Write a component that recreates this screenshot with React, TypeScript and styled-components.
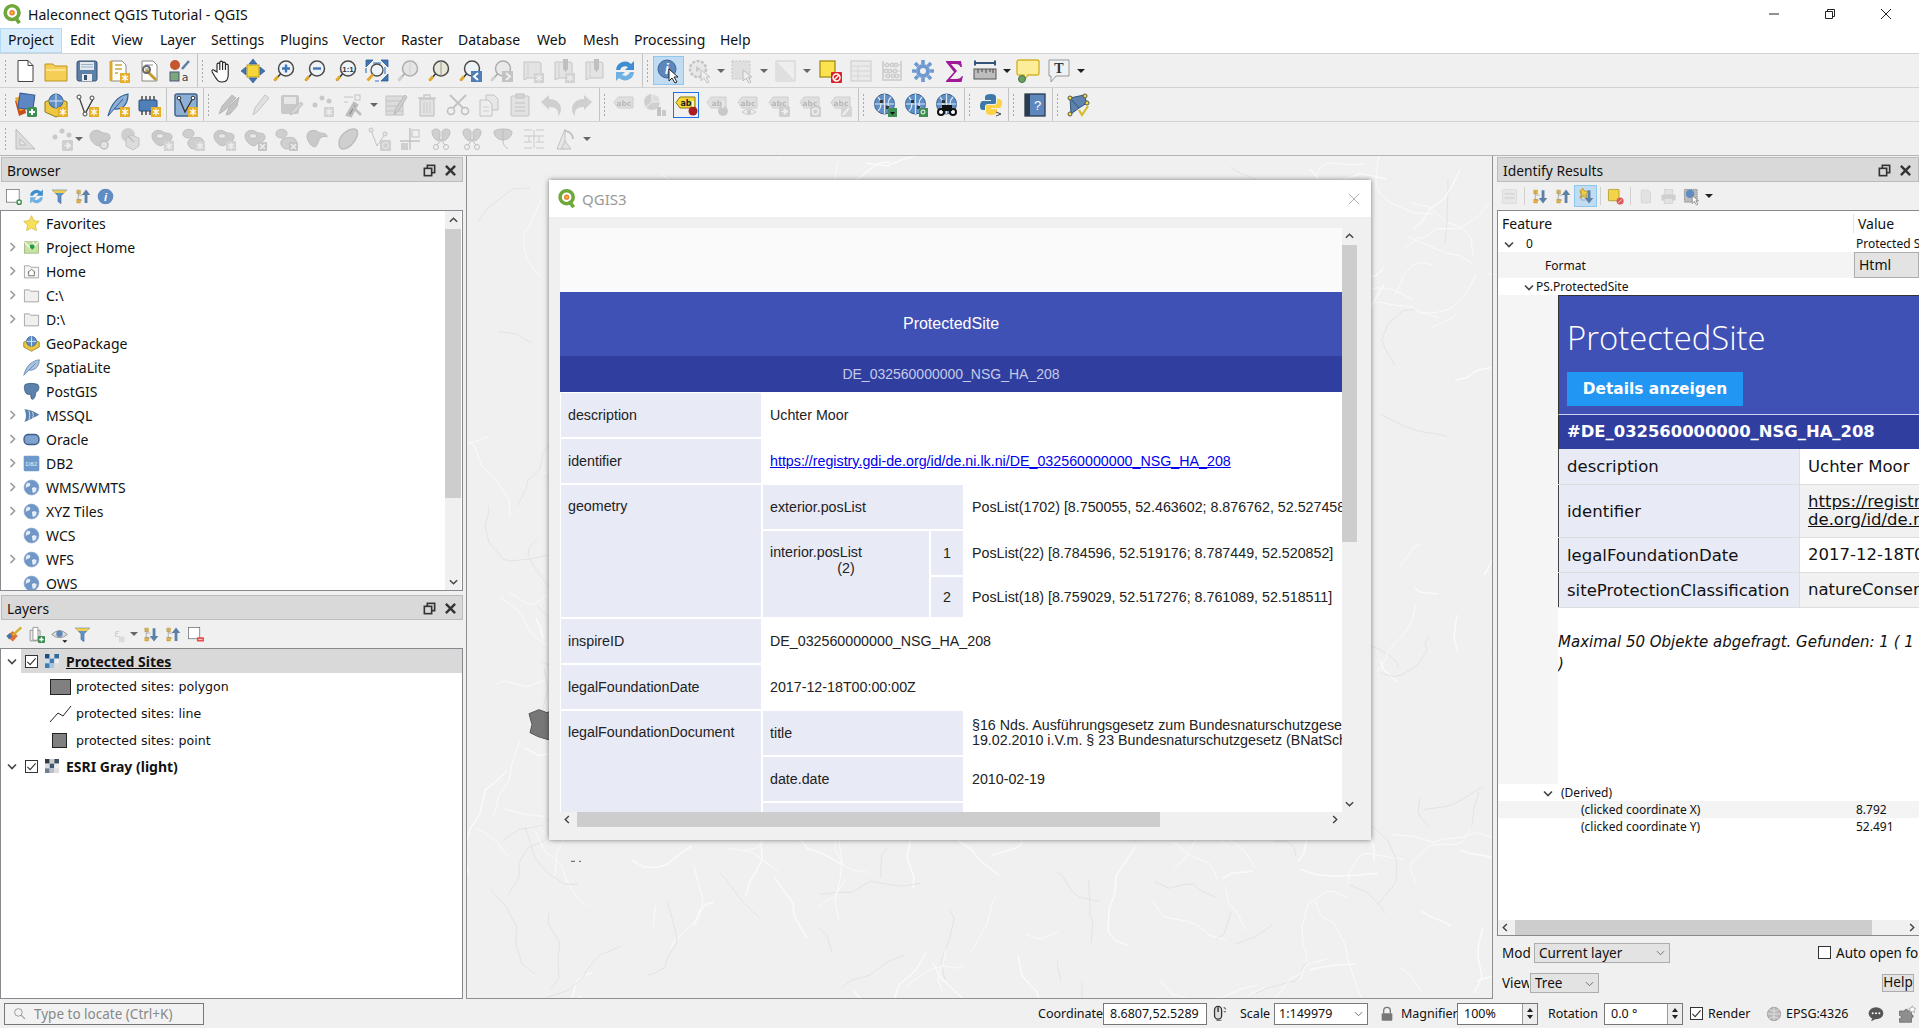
import React, { useMemo } from 'react';
import styled, { createGlobalStyle } from 'styled-components';

const UI = `"Noto Sans", "Open Sans", sans-serif`;
const VERD = `"DejaVu Sans", sans-serif`;
const ARIAL = `"Liberation Sans", Arial, sans-serif`;

const Global = createGlobalStyle`
  html, body { margin: 0; padding: 0; width: 1919px; height: 1028px; overflow: hidden; background: #f0f0f0; }
  * { box-sizing: border-box; }
  body { font-family: ${UI}; color: #111; }
`;

/* ---------- icon drawings ---------- */
const badge = (kind = 'star') => kind === 'star'
  ? <g><rect x="14" y="14" width="10" height="10" fill="#e5b024" /><path d="M19 15.5v7M16 17l6 4M22 17l-6 4" stroke="#fff" strokeWidth="1.3" /></g>
  : kind === 'plus'
    ? <g><rect x="14" y="14" width="10" height="10" rx="1.5" fill="#3f8f55" /><path d="M19 16v6M16 19h6" stroke="#fff" strokeWidth="2" /></g>
    : <g><rect x="15" y="15" width="9" height="9" rx="1" fill="#8b8b8b" /><path d="M17 17l5 5M22 17l-5 5" stroke="#fff" strokeWidth="1.6" /></g>;
const mag = (inner?: React.ReactNode, fill = '#eef3f8') => (
  <g>
    <circle cx="14" cy="9.5" r="7.5" fill={fill} stroke="#4a4a4a" strokeWidth="1.5" />
    <path d="M8.5 15L2.5 21.5" stroke="#333" strokeWidth="1.5" />
    <path d="M6 17.5L2.5 21.5" stroke="#e0a92a" strokeWidth="3" />
    {inner}
  </g>
);
const BLOB = 'M2 9c0-6 8-7 11-4 3 2 9 0 9 5 0 6-7 4-9 8-3 3-11-3-11-9z';
const blob = (extra?: React.ReactNode) => <g><path d={BLOB} fill="#9aa09a" stroke="#777" />{extra}</g>;
const globe = (extra?: React.ReactNode) => (
  <g>
    <circle cx="11.5" cy="11" r="10" fill="#5f8fc6" stroke="#37608f" />
    <path d="M1.5 11h20M11.5 1v20M5 4c4 4 4 10 0 14M18 4c-4 4-4 10 0 14" stroke="#dfe8f2" strokeWidth="1.2" fill="none" />
    <path d="M7 7h3v3H7zM13 13h3v3h-3z" fill="#333" />
    {extra}
  </g>
);
const abc = (extra?: React.ReactNode, label = 'abc') => (
  <g>
    <path d="M6 4h15v11H6l-4-5.5z" fill="#d6d6d0" stroke="#aaa" />
    <text x="12" y="12.5" fontSize="7.5" fontWeight="700" textAnchor="middle" fontFamily={VERD} fill="#666">{label}</text>
    {extra}
  </g>
);
const page = <path d="M5 2h11l4 4v16H5z" fill="#fff" stroke="#888" />;
const bookmark = (extra?: React.ReactNode) => (
  <g><path d="M4 3h15l2 1v15H8l-4 2z" fill="#e2e2de" stroke="#8d8d8d" /><path d="M8 4v15" stroke="#aaa" />{extra}</g>
);
const tool3 = <path d="M4 3h5v5H4zM4 16h5v5H4z" fill="#f0b93a" stroke="#a77a10" strokeWidth=".6" />;
const fold = <path d="M6 4v13h6M6 10h6" fill="none" stroke="#999" />;
const rasterCells = (cells: string[]) => (
  <g>{cells.map((c, i) => <rect key={i} x={(i % 3) * 8} y={Math.floor(i / 3) * 8} width="8" height="8" fill={c} />)}</g>
);

const ICONS: Record<string, React.ReactNode> = {
  qgis: <g><circle cx="11" cy="10.5" r="7.5" fill="#fff" stroke="#6ea83a" strokeWidth="4" /><path d="M14 15l5 7" stroke="#6ea83a" strokeWidth="4" /><circle cx="11" cy="10.5" r="3" fill="#ee7d31" /><circle cx="11" cy="10.5" r="1.3" fill="#f3c93f" /></g>,
  new: <g><path d="M5 1.5h10l5 5v16H5z" fill="#fff" stroke="#444" /><path d="M15 1.5v5h5" fill="none" stroke="#444" /></g>,
  open: <g><path d="M1 5h8l2 2h12v15H1z" fill="#f5cf55" stroke="#bd9425" /><path d="M2 11h20" stroke="#fbe9a5" strokeWidth="1.5" /></g>,
  save: <g><rect x="2" y="2" width="20" height="20" rx="2" fill="#5c80a8" stroke="#34506f" /><rect x="5" y="3" width="14" height="8" fill="#e2e8ee" /><path d="M6 5.5h12M6 8h12" stroke="#9fb1c4" /><rect x="7" y="15" width="10" height="7" fill="#ececec" /><rect x="9" y="16" width="3" height="5" fill="#34506f" /></g>,
  tpl: <g>{page}<path d="M5 2v20" stroke="#d8a72d" strokeWidth="3" /><path d="M9 6h7M9 10h7M9 14h3" stroke="#c9a545" strokeWidth="1.5" />{badge()}</g>,
  wrench: <g>{page}<path d="M8 6h8M8 10h4" stroke="#88a" /><path d="M9 11l10 10" stroke="#c89a2c" strokeWidth="3" /><circle cx="9.5" cy="10.5" r="3.5" fill="none" stroke="#666" strokeWidth="2" /></g>,
  styles: <g><circle cx="7" cy="6" r="5" fill="#c4572d" /><path d="M14 10l7-8" stroke="#5c80a8" strokeWidth="2.5" /><rect x="2" y="13" width="9" height="9" fill="#78a87c" stroke="#557" /><text x="17" y="22" fontSize="11" fontFamily={VERD} fill="#444" textAnchor="middle">a</text></g>,
  hand: <path d="M7 13V5.500a1.400 1.400 0 0 1 2.800 0V11V3.500a1.400 1.400 0 0 1 2.800 0V11V4.500a1.400 1.400 0 0 1 2.800 0V11V6.500a1.400 1.400 0 0 1 2.800 0V16c0 4-2 7-6 7s-5-2-7-5l-3-5c-1-2 1-3 2.300-1.500z" fill="#fff" stroke="#222" strokeWidth="1.100" />,
  pan: <g><rect x="6" y="6" width="12" height="12" fill="#f5d63a" stroke="#b79a1a" /><path d="M12 0l4 5H8zM12 24l4-5H8zM0 12l5-4v8zM24 12l-5-4v8z" fill="#3f74b5" stroke="#254d80" strokeWidth=".6" /></g>,
  zin: mag(<path d="M14 5.500v8M10 9.500h8" stroke="#3f74b5" strokeWidth="2.400" />),
  zout: mag(<path d="M10 9.500h8" stroke="#3f74b5" strokeWidth="2.400" />),
  z11: mag(<text x="14" y="12.500" fontSize="8" fontWeight="700" textAnchor="middle" fontFamily={ARIAL} fill="#333">1:1</text>),
  zfull: <g><path d="M1 1h7L1 8zM23 1h-7l7 7zM23 22h-7l7-7z" fill="#3f74b5" stroke="#2c5a92" strokeWidth=".8" /><path d="M8 4h8M20 8v7M1 9v5M10 22h4" stroke="#6f9ad0" strokeWidth="1.600" /><circle cx="12" cy="11" r="6" fill="#eef3f8" stroke="#4a4a4a" strokeWidth="1.300" /><path d="M8 15.500L2.500 21.500" stroke="#e0a92a" strokeWidth="2.800" /></g>,
  zsel: mag(<path d="M14 2v15" stroke="#aaa" />, '#e8e8e0'),
  zlay: mag(<path d="M14 2v15" stroke="#999" />, '#e7e7d8'),
  zlast: <g>{mag()}<rect x="13" y="12" width="11" height="11" fill="#4e7fb8" /><path d="M20 14l-4 3.500 4 3.500" fill="none" stroke="#fff" strokeWidth="2" /></g>,
  znext: <g>{mag()}<rect x="13" y="12" width="11" height="11" fill="#888" /><path d="M17 14l4 3.500-4 3.500" fill="none" stroke="#fff" strokeWidth="2" /></g>,
  bmnew: bookmark(badge()),
  bmstar: bookmark(<g><path d="M12 0h5v10l-2.500 3-2.500-3z" fill="#5c80a8" />{badge()}</g>),
  bm: bookmark(<path d="M12 0h5v10l-2.500 3-2.500-3z" fill="#5c80a8" />),
  refresh: <g><path d="M3 11a9 9 0 0 1 15-6l3-3v9h-9l3-3a5.500 5.500 0 0 0-8 3z" fill="#3f8ecf" /><path d="M21 13a9 9 0 0 1-15 6l-3 3v-9h9l-3 3a5.500 5.500 0 0 0 8-3z" fill="#6fb1e2" /></g>,
  identify: <g><circle cx="10" cy="10" r="9" fill="#5c86bc" stroke="#3e6596" /><text x="10" y="15" fontSize="14" fontStyle="italic" fontWeight="700" textAnchor="middle" fontFamily={ARIAL} fill="#fff">i</text><path d="M12 10v12l3-3 3 5 2-1-3-5h4z" fill="#fff" stroke="#222" /></g>,
  actions: <g><circle cx="10" cy="10" r="8" fill="#eee" stroke="#888" strokeWidth="2.500" strokeDasharray="3 1.500" /><path d="M8 7v6l5-3z" fill="#999" /><path d="M13 11v11l3-3 3 5 2-1-3-5h4z" fill="#fff" stroke="#888" /></g>,
  select: <g><rect x="1" y="2" width="18" height="18" fill="#d8d6c9" stroke="#888" strokeDasharray="2 1.500" /><path d="M12 11v11l3-3 3 5 2-1-3-5h4z" fill="#fff" stroke="#777" /></g>,
  selpoly: <g><path d="M2 2h19v20H2z" fill="#fff" stroke="#aaa" /><path d="M2 2l19 20H2z" fill="#d8d6c9" /></g>,
  desel: <g><rect x="2" y="2" width="15" height="16" fill="#fbe34f" stroke="#a58d14" strokeWidth="1.300" /><rect x="13" y="13" width="11" height="11" rx="1" fill="#d8232a" /><circle cx="18.500" cy="18.500" r="3.500" fill="none" stroke="#fff" strokeWidth="1.500" /><path d="M16 21l5-5" stroke="#fff" strokeWidth="1.500" /></g>,
  table: <g><rect x="2" y="2" width="20" height="20" fill="#f5f5f5" stroke="#999" /><path d="M2 7h20M2 12h20M2 17h20M9 7v15" stroke="#bbb" /></g>,
  abacus: <g><path d="M3 2v18M21 2v18M2 21h20" stroke="#999" strokeWidth="1.500" /><path d="M3 6h18M3 12h18M3 17h18" stroke="#aaa" />{[7, 12, 16].map(x => <circle key={x} cx={x} cy="6" r="2" fill="#ddd" stroke="#888" />)}{[6, 10, 15].map(x => <circle key={x} cx={x} cy="12" r="2" fill="#ddd" stroke="#888" />)}{[8, 13, 17].map(x => <circle key={x} cx={x} cy="17" r="2" fill="#ddd" stroke="#888" />)}</g>,
  gear: <g><path d="M12 1v4M12 19v4M1 12h4M19 12h4M4 4l3 3M17 17l3 3M20 4l-3 3M7 17l-3 3" stroke="#6f9ad0" strokeWidth="3.600" /><circle cx="12" cy="12" r="7" fill="#6f9ad0" /><circle cx="12" cy="12" r="3" fill="#f0f0f0" /></g>,
  sigma: <path d="M4 2h15l1 6h-1.500c-1-2-2-3-5-3H9l6 7-7 8h6c3 0 5-1 6-3h1l-1.500 6H4v-1l8-9L4 3z" fill="#a0189a" />,
  ruler: <g><path d="M2 4h20M2 1.500v5M22 1.500v5" stroke="#35547a" strokeWidth="2" /><rect x="1" y="10" width="22" height="10" fill="#bdbdbd" stroke="#555" /><path d="M5 10v4M9 10v3M13 10v4M17 10v3M20 10v4" stroke="#444" /></g>,
  callout: <g><path d="M3 1h18q2 0 2 2v11q0 2-2 2h-9l-4 5v-5H3q-2 0-2-2V3q0-2 2-2z" fill="#fdec98" stroke="#d5b32d" strokeWidth="1.400" /><circle cx="6" cy="20" r="3.500" fill="#6aa061" stroke="#47734a" /></g>,
  textann: <g><path d="M2 1h20v16H9l-5 6v-6H2z" fill="#eef2f5" stroke="#999" /><text x="12" y="14" fontSize="14" fontWeight="700" textAnchor="middle" fontFamily={`"Liberation Serif", serif`} fill="#333">T</text></g>,
  dsm: <g><path d="M2 8l8-3 3 15-7 3z" fill="#c94f1f" /><path d="M2 5l9-3 3 13-7 3z" fill="#f0a52c" /><rect x="6" y="1" width="15" height="15" fill="#5c86c4" stroke="#33588c" transform="rotate(8 13 8)" />{badge('plus')}</g>,
  gpkg: <g><path d="M1 9l11-5 11 5v10l-11 5-11-5z" fill="#eec742" stroke="#8b7a1d" /><circle cx="12" cy="8" r="7" fill="#5f8fc6" stroke="#37608f" /><path d="M5 8h14M12 1v14" stroke="#dfe8f2" />{badge()}</g>,
  shp: <g><path d="M4 4l6 17 8-15" fill="none" stroke="#444" strokeWidth="1.300" /><path d="M10 21L18 6M18 6" stroke="#444" />{[[4, 4], [10, 21], [17, 5]].map(([x, y], i) => <circle key={i} cx={x} cy={y} r="2" fill="#fff" stroke="#444" />)}{badge()}</g>,
  feather: <g><path d="M2 23C5 12 11 3 22 1c0 10-5 16-14 15" fill="#8fb0d4" stroke="#2f5f95" strokeWidth="1.200" /><path d="M2 23L17 6" stroke="#2f5f95" />{badge()}</g>,
  chip: <g><rect x="2" y="7" width="18" height="11" rx="1" fill="#4e7fb8" stroke="#284e7d" /><path d="M5 3v4M9 3v4M13 3v4M17 3v4M5 18v4M9 18v4M13 18v4" stroke="#333" strokeWidth="1.300" />{badge()}</g>,
  digit: <g><rect x="1" y="1" width="22" height="22" rx="2" fill="#8eb0d6" stroke="#41658f" strokeWidth="1.500" /><path d="M5 5l6 14 8-14" fill="none" stroke="#333" strokeWidth="1.300" /><circle cx="5" cy="5" r="1.800" fill="#fff" stroke="#333" /><circle cx="19" cy="5" r="1.800" fill="#fff" stroke="#333" />{badge()}</g>,
  pencils: <path d="M2 21l3-8L15 2l4 3L8 17zM9 22l3-8L22 4l-2 9-7 8z" fill="#888" stroke="#666" />,
  pencil: <path d="M5 22l2-7L17 2l4 3L10 18z" fill="#ddd" stroke="#888" />,
  saveedit: <g><rect x="2" y="2" width="18" height="19" rx="2" fill="#999" /><rect x="5" y="4" width="12" height="7" fill="#eee" /><path d="M11 22l2-5 9-8 2 2-8 9z" fill="#bbb" stroke="#777" /></g>,
  pts: <g><circle cx="5" cy="12" r="2.500" fill="#999" /><circle cx="12" cy="5" r="2.500" fill="#999" /><circle cx="19" cy="8" r="2.500" fill="#999" />{badge()}</g>,
  vtool: <g><path d="M3 4h9M3 9h4" stroke="#888" /><rect x="14" y="2" width="5" height="5" fill="none" stroke="#888" /><path d="M6 22l7-12 3 2-6 11zM12 14l8 8" stroke="#777" strokeWidth="2.500" /></g>,
  tablepen: <g><rect x="2" y="3" width="17" height="19" fill="#ccc" stroke="#888" /><path d="M2 8h17M2 13h17M2 18h17" stroke="#888" /><path d="M10 22l2-7 9-13 2 2-8 13z" fill="#aaa" stroke="#666" /></g>,
  trash: <g><path d="M3 5h18M9 5V2h6v3" stroke="#999" strokeWidth="1.500" fill="none" /><path d="M5 6h14v17H5z" fill="#ddd" stroke="#a66" /><path d="M9 9v11M12 9v11M15 9v11" stroke="#a99" /></g>,
  cut: <g><circle cx="5" cy="18" r="3.500" fill="none" stroke="#777" strokeWidth="1.500" /><circle cx="19" cy="18" r="3.500" fill="none" stroke="#777" strokeWidth="1.500" /><path d="M7 15L20 2M17 15L4 2" stroke="#888" strokeWidth="2" /></g>,
  copy: <g><path d="M9 2h8l4 4v11H9z" fill="#eee" stroke="#888" /><path d="M3 7h8l4 4v12H3z" fill="#fff" stroke="#888" /><path d="M6 14h6M6 18h6" stroke="#aaa" /></g>,
  paste: <g><rect x="3" y="3" width="18" height="20" rx="1" fill="#ddd" stroke="#888" /><rect x="8" y="1" width="8" height="4" fill="#bbb" stroke="#888" /><path d="M7 10h10M7 14h10M7 18h10" stroke="#888" /></g>,
  undo: <path d="M2 9l8-7v4c7 0 12 4 12 10 0 3-1 5-3 7 1-6-2-9-9-9v3z" fill="#aaa" />,
  redo: <path d="M22 9l-8-7v4C7 6 2 10 2 16c0 3 1 5 3 7-1-6 2-9 9-9v3z" fill="#aaa" />,
  abc: abc(),
  diagram: <g><circle cx="9" cy="9" r="8" fill="#aaa" /><path d="M9 9V1a8 8 0 0 1 8 8zM9 9l-6 5" stroke="#fff" fill="#ccc" /><rect x="14" y="14" width="4" height="9" fill="#888" /><rect x="19" y="17" width="4" height="6" fill="#999" /></g>,
  abpin: <g><path d="M6 4h15v11H6l-4-5.500z" fill="#f6d835" stroke="#8d7a10" /><text x="12" y="12.500" fontSize="8" fontWeight="700" textAnchor="middle" fontFamily={VERD} fill="#222">ab</text><circle cx="19" cy="18" r="4.500" fill="#a81e22" /><path d="M19 8v6" stroke="#fff" strokeWidth="1.500" /></g>,
  abpin2: abc(<g><circle cx="18" cy="18" r="5" fill="#999" /><path d="M18 8v7" stroke="#fff" strokeWidth="1.500" /></g>, 'ab'),
  abeye: abc(<g><path d="M6 19q7-6 14 0-7 5-14 0z" fill="#fff" stroke="#999" /><circle cx="13" cy="19" r="2" fill="#999" /></g>),
  abarrow: abc(<g><rect x="12" y="13" width="11" height="11" rx="1.500" fill="#aaa" /><path d="M14 18.500h4M17 15.500l4 3-4 3z" stroke="#fff" fill="#fff" /></g>),
  abrot: abc(<g><rect x="12" y="13" width="11" height="11" rx="1.500" fill="#aaa" /><circle cx="17.500" cy="18.500" r="3" fill="none" stroke="#fff" strokeWidth="1.500" /></g>),
  abpen: abc(<g><rect x="12" y="13" width="11" height="11" rx="1.500" fill="#bbb" /><path d="M14 22l6-7" stroke="#fff" strokeWidth="2" /></g>),
  wms: globe(<g><rect x="15" y="15" width="9" height="9" fill="#3f8f55" /><path d="M17 19h5l-2.500 3z" fill="#111" /></g>),
  wmsq: globe(<g><rect x="15" y="15" width="9" height="9" fill="#3f8f55" /><circle cx="19" cy="19" r="2" fill="none" stroke="#fff" /></g>),
  wfs: <g>{globe()}<circle cx="6" cy="19" r="4" fill="#111" /><circle cx="18" cy="19" r="4" fill="#111" /><circle cx="6" cy="19" r="2" fill="#fff" /><circle cx="18" cy="19" r="2" fill="#fff" /><rect x="7" y="12" width="10" height="6" fill="#111" /></g>,
  python: <g><path d="M12 1c-4 0-6 1-6 3v3h6v1H4c-2 0-3 2-3 5s1 4 3 4h2v-3c0-2 1-3 3-3h6c2 0 2-1 2-2V4c0-2-2-3-5-3z" fill="#3c78a9" /><path d="M12 22c4 0 6-1 6-3v-3h-6v-1h8c2 0 3-2 3-5s-1-4-3-4h-2v3c0 2-1 3-3 3H9c-2 0-2 1-2 2v5c0 2 2 3 5 3z" fill="#fcd347" /><path d="M17 19l5 2-5 2" stroke="#444" fill="none" /></g>,
  help: <g><rect x="2" y="1" width="20" height="22" fill="#5e87bd" stroke="#2b3a4c" strokeWidth="1.300" /><rect x="2" y="1" width="5" height="22" fill="#2b3a4c" /><text x="14.500" y="17" fontSize="13" textAnchor="middle" fontFamily={ARIAL} fill="#fff">?</text></g>,
  net: <g><path d="M4 5l14-3 3 8-8 5-8 6z" fill="#5c82ad" stroke="#37547a" /><path d="M4 5l9 10" stroke="#37547a" />{[[4, 5], [19, 3], [21, 10], [4, 21]].map(([x, y], i) => <circle key={i} cx={x} cy={y} r="2" fill="#f4dc3a" stroke="#555" />)}<path d="M13 17l3 5 6-9" fill="none" stroke="#d6bc2a" strokeWidth="2.200" /></g>,
  triangle: <g><path d="M3 2v20h19z" fill="#ccc" stroke="#777" /><path d="M7 12v6h6z" fill="#f0f0f0" stroke="#777" /></g>,
  ptarrow: <g><circle cx="5" cy="10" r="2.500" fill="#999" /><circle cx="12" cy="4" r="2.500" fill="#999" /><circle cx="19" cy="8" r="2.500" fill="#999" /><rect x="12" y="13" width="11" height="11" rx="1" fill="#aaa" /><path d="M14 18.500h4M17 15.500l4 3-4 3z" stroke="#fff" fill="#fff" /></g>,
  blobrot: blob(<circle cx="16" cy="18" r="4" fill="#ddd" stroke="#777" strokeWidth="1.500" />),
  hexarrow: <g><circle cx="9" cy="8" r="7" fill="#aaa" /><path d="M12 8l8 3v8l-6 4-7-4v-7z" fill="#ccc" stroke="#888" /><path d="M9 9l6 6" stroke="#777" strokeWidth="1.500" /></g>,
  blobring: <g>{blob(<ellipse cx="10" cy="9" rx="4" ry="2.500" fill="#eee" stroke="#777" />)}{badge()}</g>,
  blobs: <g><path d="M2 7c0-5 7-6 10-3s-1 7-4 7-6-1-6-4z" fill="#aaa" stroke="#777" /><path d="M8 13c3-3 12-4 14 0s-4 9-9 9-8-6-5-9z" fill="#aaa" stroke="#777" />{badge()}</g>,
  blobringx: <g>{blob(<ellipse cx="10" cy="9" rx="4" ry="2.500" fill="#eee" stroke="#777" />)}{badge('x')}</g>,
  blobsx: <g><path d="M2 7c0-5 7-6 10-3s-1 7-4 7-6-1-6-4z" fill="#aaa" stroke="#777" /><path d="M8 13c3-3 12-4 14 0s-4 9-9 9-8-6-5-9z" fill="#aaa" stroke="#777" />{badge('x')}</g>,
  blobcut: <path d="M2 9c0-6 8-7 11-4 3 2 9 0 9 5-2-1-6-1-8 3-1 3-2 6-4 7-3 0-8-5-8-11z" fill="#999" stroke="#777" />,
  blobdiag: <path d="M3 16C3 8 12 2 18 2c4 0 4 4 3 7-2 7-9 13-14 13-3 0-4-3-4-6z" fill="#aaa" stroke="#777" strokeWidth="1.500" />,
  vrot: <g><path d="M4 3l6 16 8-12" fill="none" stroke="#888" /><circle cx="4" cy="3" r="2" fill="#eee" stroke="#888" /><circle cx="18" cy="7" r="2" fill="#eee" stroke="#888" /><rect x="13" y="13" width="11" height="11" rx="1" fill="#aaa" /><circle cx="18.500" cy="18.500" r="3" fill="none" stroke="#fff" /></g>,
  cross: <g><path d="M12 1v22M2 14h20" stroke="#888" strokeWidth="1.500" /><rect x="14" y="3" width="7" height="7" fill="none" stroke="#888" /><rect x="3" y="16" width="7" height="7" fill="#aaa" /></g>,
  split: <g><path d="M3 5c0-4 8-4 8 0s0 7-1 9c-3 0-7-5-7-9zM13 5c1-4 8-4 8 0s-4 9-7 9c-1-2-1-6-1-9z" fill="#aaa" stroke="#777" /><circle cx="7" cy="20" r="2.500" fill="none" stroke="#777" /><circle cx="17" cy="20" r="2.500" fill="none" stroke="#777" /><path d="M8 18l6-7M16 18l-6-7" stroke="#777" /></g>,
  split2: <g><path d="M3 5c0-4 18-4 18 0s-4 8-9 8-9-4-9-8z" fill="#aaa" stroke="#777" /><path d="M12 3v10M12 13c0 5 2 7 5 9" stroke="#777" fill="none" /></g>,
  offset: <path d="M2 3h8M14 3h8M2 9h20M12 3v18M2 15h8M14 15h8M2 21h8M14 21h8M7 9v6M17 9v6" stroke="#999" fill="none" />,
  reshape: <g><path d="M12 2v20H4z" fill="#eee" stroke="#888" /><path d="M12 4a8 8 0 0 1 8 8" fill="none" stroke="#888" strokeWidth="2" /><path d="M12 14l6 8H8z" fill="#ddd" stroke="#888" /></g>,
  /* dock / tree */
  newdoc: <g><rect x="2" y="2" width="18" height="18" fill="#fff" stroke="#666" /><circle cx="20" cy="20" r="3" fill="#fff" stroke="#3f8f55" strokeWidth="2" /></g>,
  filterY: <g><path d="M2 3h20l-8 8v11l-4-3v-8z" fill="#5f93c9" stroke="#38659a" /><path d="M2 3h20l-3 4H5z" fill="#f1cf4d" /></g>,
  collapse: <g>{tool3}{fold}<path d="M17 2l6 8h-4v11h-4V10h-4z" fill="#5c80a8" /></g>,
  expand: <g>{tool3}{fold}<path d="M17 22l6-8h-4V3h-4v11h-4z" fill="#5c80a8" /></g>,
  expandnew: <g><path d="M4 4l2 5-2 5 5-2 5 2-1-5 2-4-5-1-2-4-2 4z" fill="#f3cf3f" stroke="#aa8b1a" />{fold}<path d="M17 22l6-8h-4V3h-4v11h-4z" fill="#5c80a8" /></g>,
  info: <g><circle cx="12" cy="12" r="11" fill="#5f8cc2" /><text x="12" y="18" fontSize="16" fontStyle="italic" fontWeight="700" textAnchor="middle" fontFamily={ARIAL} fill="#fff">i</text></g>,
  paint: <g><path d="M2 14l9-7 7 7-7 8z" fill="#e56f2e" /><path d="M2 14l5-4 3 5-4 4z" fill="#3f74b5" /><path d="M11 13L23 2" stroke="#d6b02a" strokeWidth="3.500" /></g>,
  addgroup: <g><path d="M3 6h14v15H3z" fill="#eee" stroke="#777" /><path d="M7 2h7v18H7z" fill="#fff" stroke="#777" />{badge('plus')}</g>,
  eye: <g><path d="M1 12q11-11 22 0-11 9-22 0z" fill="#ddd" stroke="#777" /><circle cx="12" cy="11" r="4.500" fill="#5e88bb" /><path d="M16 20h7l-3.500 3.500z" fill="#111" /></g>,
  epsilon: <g><text x="7" y="15" fontSize="16" fontFamily={VERD} fill="#999">ε</text><path d="M14 15h8v8h-8z" fill="#ccc" /></g>,
  removeL: <g><rect x="2" y="2" width="16" height="16" fill="#fff" stroke="#666" /><rect x="14" y="16" width="10" height="6" rx="1" fill="#e74c4c" /><path d="M16 19h6" stroke="#fff" /></g>,
  treeBtn: <g><rect x="2" y="2" width="20" height="20" rx="1" fill="#eee" stroke="#bbb" /><path d="M5 8h14M5 14h14" stroke="#bbb" strokeWidth="2" /></g>,
  copyF: <g><path d="M6 3h10l3 3v15H6z" fill="#ddd" stroke="#aaa" /></g>,
  print: <g><rect x="6" y="2" width="12" height="8" fill="#ddd" stroke="#aaa" /><rect x="2" y="9" width="20" height="9" rx="2" fill="#aaa" /><rect x="6" y="15" width="12" height="7" fill="#ddd" stroke="#aaa" /></g>,
  idsel: <g><rect x="2" y="2" width="18" height="18" fill="#bbb" stroke="#777" strokeDasharray="2 1" /><circle cx="10" cy="8" r="6" fill="#5f8cc2" /><path d="M13 11v11l3-3 3 5 2-1-3-5h4z" fill="#fff" stroke="#777" /></g>,
  deselS: <g><rect x="2" y="2" width="15" height="16" rx="1" fill="#f3d34a" stroke="#a58d14" /><circle cx="18.500" cy="18.500" r="5" fill="#dc5a5a" /><path d="M16 21l5-5" stroke="#fff" /></g>,
  favstar: <path d="M12 1l3.300 7 7.700 1-5.500 5.300 1.400 7.700-6.900-3.700L5.100 22l1.400-7.700L1 9l7.700-1z" fill="#f7e15a" stroke="#d5b32d" />,
  projhome: <g><rect x="2" y="4" width="20" height="16" fill="#c9e2a4" stroke="#8cab73" /><path d="M2 4l8 9M13 13l9-9M14 4l3 6" stroke="#fff" strokeWidth="1.500" /><path d="M10 8h6v4l-3 3-3-3z" fill="#1f9a3c" /></g>,
  homefld: <g><path d="M2 4h7l2 2h11v15H2z" fill="#f6f6f6" stroke="#8a8a8a" /><path d="M12 9l5 4h-1v5H8v-5H7z" fill="#fff" stroke="#444" /></g>,
  fld: <path d="M2 4h7l2 2h11v15H2z" fill="#f0f0ee" stroke="#8a8a8a" />,
  gp: <g><path d="M1 10l11-5 11 5v7l-11 6-11-6z" fill="#ecc33c" stroke="#8b7a1d" /><circle cx="12" cy="9" r="7" fill="#5f8fc6" stroke="#37608f" /><path d="M5 9h14M12 2v14" stroke="#fff" /></g>,
  spat: <g><path d="M1 23C4 12 10 3 23 1c0 10-6 15-14 15" fill="#a9c2dd" stroke="#527cab" /><path d="M1 23L18 6" stroke="#527cab" /></g>,
  pg: <path d="M3 2c6-2 10-2 18 0 3 4 1 10-3 11 0 5-2 10-5 10-2 0-2-4-2-7-5 1-7-1-8-4-1-3-2-7 0-10z" fill="#5b82ad" stroke="#2f5278" />,
  mssql: <g><path d="M2 3c7 0 14 3 21 8-7 4-14 8-21 10 3-6 3-12 0-18z" fill="#5b82ad" /><path d="M8 5c2 4 2 10 0 14M13 7c2 3 2 7 0 10" stroke="#fff" fill="none" /></g>,
  oracle: <rect x="1.500" y="5" width="21" height="14" rx="6" fill="#7fa3cf" stroke="#3f5f89" strokeWidth="2" />,
  db2: <g><rect x="1" y="1" width="22" height="22" rx="2" fill="#6d9acb" /><text x="12" y="15" fontSize="8" textAnchor="middle" fontFamily={VERD} fill="#eaf0f7">DB2</text></g>,
  treeglobe: <g><circle cx="12" cy="12" r="10.500" fill="#6f97c7" stroke="#8aa9cd" /><path d="M6 6c3-2 5 1 4 3s-4 1-5 3-2-4 1-6zM14 12c3-1 6 0 5 3s-3 5-5 4 0-3-1-4 0-3 1-3z" fill="#e8eef6" /></g>,
  mouse: <g><rect x="5" y="2" width="10" height="18" rx="5" fill="#ddd" stroke="#333" strokeWidth="1.800" /><path d="M10 3v7" stroke="#333" strokeWidth="2" /><path d="M18 3l3 3M21 10l-3-1M7 21q4 2 8 0" stroke="#666" strokeWidth="1.500" fill="none" /></g>,
  lock: <g><path d="M7 11V7a5 5 0 0 1 10 0v4" fill="none" stroke="#777" strokeWidth="2" /><rect x="4" y="11" width="16" height="11" rx="1.500" fill="#777" /></g>,
  sglobe: <g><circle cx="12" cy="12" r="10" fill="#bbb" stroke="#888" /><path d="M2 12h20M12 2v20M5 5q7 5 14 0M5 19q7-5 14 0" stroke="#eee" fill="none" /></g>,
  msg: <g><ellipse cx="12" cy="11" rx="11" ry="9" fill="#555" /><path d="M6 18l-1 5 6-3z" fill="#555" /><circle cx="7" cy="11" r="1.500" fill="#fff" /><circle cx="12" cy="11" r="1.500" fill="#fff" /><circle cx="17" cy="11" r="1.500" fill="#fff" /></g>,
  puzzle: <g><path d="M2 8h7c-1-3 5-3 4 0h5v5c3-1 3 5 0 4v6H2v-5c3 1 3-5 0-4z" fill="#8e8e8e" stroke="#666" /><path d="M19 1l1.500 3 3 .5-2 2.500.5 3-3-1.500-3 1.500.5-3-2-2.500 3-.5z" fill="#fff" stroke="#999" /></g>,
  float: <g><rect x="8" y="2.500" width="13.500" height="13.500" fill="#d9d9d9" stroke="#333" strokeWidth="3" /><rect x="2.500" y="8" width="13.500" height="13.500" fill="#d9d9d9" stroke="#333" strokeWidth="3" /></g>,
  close: <path d="M3.500 3.500l17 17M20.500 3.500l-17 17" stroke="#333" strokeWidth="4.400" />,
  search: <g><circle cx="10" cy="10" r="7" fill="none" stroke="#999" strokeWidth="1.800" /><path d="M15 15l7 7" stroke="#999" strokeWidth="2" /></g>,
  thinx: <path d="M3 3l18 18M21 3L3 21" stroke="#777" strokeWidth="1" />,
  raster1: rasterCells(['#1f4f7d', '#ddd', '#2f6da1', '#cfdde9', '#3c7fb5', '#eee', '#3c7fb5', '#aac4da', '#ddd']),
  raster2: rasterCells(['#2f3b46', '#ccc', '#3d4f60', '#ddd', '#3c5a78', '#eee', '#6f7f90', '#bbc', '#ddd']),
};

const Svg = styled.svg<{ $s: number }>`
  width: ${p => p.$s}px;
  height: ${p => p.$s}px;
  flex: none;
  display: block;
  overflow: visible;
`;
const Ico = ({ n, s = 24 }: { n: string; s?: number }) => <Svg $s={s} viewBox="0 0 24 24">{ICONS[n]}</Svg>;

/* ---------- window frame ---------- */
const Root = styled.div`
  width: 1919px;
  height: 1028px;
  display: flex;
  flex-direction: column;
  overflow: hidden;
  background: #f0f0f0;
`;
const TitleBar = styled.div`
  height: 28px;
  background: #fff;
  display: flex;
  align-items: center;
  padding: 0 5px 0 2px;
  font-size: 14.100px;
  flex: none;
`;
const TitleText = styled.span`
  margin-left: 4px;
  flex: 1;
  white-space: nowrap;
`;
const WinBtn = styled.div`
  width: 56px;
  height: 28px;
  display: flex;
  align-items: center;
  justify-content: center;
`;
const MenuBar = styled.div`
  height: 25px;
  background: #fff;
  display: flex;
  flex: none;
  font-size: 14px;
`;
const MenuItem = styled.div<{ $w: number; $on?: boolean }>`
  width: ${p => p.$w}px;
  height: 25px;
  line-height: 24px;
  padding-left: 8px;
  flex: none;
  white-space: nowrap;
  background: ${p => (p.$on ? '#d9ecfb' : 'transparent')};
  box-shadow: ${p => (p.$on ? 'inset 0 0 0 1px #b5dbf7' : 'none')};
`;
const Toolbar = styled.div`
  height: 34px;
  flex: none;
  display: flex;
  align-items: center;
  padding-left: 3px;
  background: #f0f0f0;
  border-top: 1px solid #d2d2d2;
`;
const Gripper = styled.div`
  width: 6px;
  height: 24px;
  flex: none;
  background-image: radial-gradient(circle, #a8a8a8 0.9px, transparent 1.1px);
  background-size: 3px 4px;
  background-repeat: repeat-y;
  background-position: 1px 0;
`;
const ToolSep = styled.div`
  width: 5px;
  align-self: stretch;
  flex: none;
  border-right: 1px solid #c4c4c4;
  transform: translateX(-2px);
`;
const Spacer = styled.div<{ $w: number }>`
  width: ${p => p.$w}px;
  flex: none;
`;
const VGap = styled.div<{ $h: number }>`
  height: ${p => p.$h}px;
  flex: none;
`;
const Slot = styled.div<{ $w?: number; $off?: boolean; $active?: boolean; $boxed?: boolean; $h?: number }>`
  width: ${p => p.$w ?? 31}px;
  height: ${p => p.$h ?? 29}px;
  flex: none;
  display: flex;
  align-items: center;
  justify-content: center;
  background: ${p => (p.$active ? '#bfdcf3' : 'transparent')};
  box-shadow: ${p => (p.$active ? 'inset 0 0 0 1px #8fc6ee' : 'none')};
  & > svg {
    ${p => (p.$off ? 'filter: grayscale(1) contrast(.85); opacity: .42;' : '')}
    ${p => (p.$boxed ? 'outline: 1px solid #1a73e8; outline-offset: 0;' : '')}
  }
`;
const Drop = styled.div<{ $w?: number; $off?: boolean }>`
  width: ${p => p.$w ?? 12}px;
  flex: none;
  display: flex;
  justify-content: center;
  &::after {
    content: '';
    border-left: 4px solid transparent;
    border-right: 4px solid transparent;
    border-top: 4px solid ${p => (p.$off ? '#666' : '#222')};
  }
`;
type Item = string | number;
const Tools = ({ items, size = 24, h }: { items: Item[]; size?: number; h?: number }) => (
  <>
    {items.map((it, i) => {
      if (typeof it === 'number') return <Spacer key={i} $w={it} />;
      if (it === 'G') return <Gripper key={i} />;
      if (it === 'S') return <ToolSep key={i} />;
      if (it === 'v') return <Drop key={i} />;
      if (it === '~v') return <Drop key={i} $off />;
      if (it === 'vn') return <Drop key={i} $w={10} $off />;
      const off = it[0] === '~';
      const [raw, flag] = (off ? it.slice(1) : it).split('@');
      const [name, w] = raw.split(':');
      return (
        <Slot key={i} $off={off} $active={flag === 'on'} $boxed={flag === 'box'} $w={w ? +w : undefined} $h={h}>
          <Ico n={name} s={size} />
        </Slot>
      );
    })}
  </>
);

const ROW1: Item[] = ['G', 'new', 'open', 'save', 'tpl', 'wrench', 'styles', 'S', 'G', 'hand', 'pan', 'zin', 'zout', 'z11', 'zfull', '~zsel', 'zlay', 'zlast', '~znext', '~bmnew', '~bmstar', '~bm', 'refresh', 'S', 'G', 2, 'identify@on', '~actions', '~v', '~select', '~v', '~selpoly', '~v', 1.5, 'desel', '~table', '~abacus', 'gear', 'sigma', 'ruler', 'v', 'callout', 'textann', 'v'];
const ROW2: Item[] = ['G', 'dsm', 'gpkg', 'shp', 'feather', 'chip', 'S', 1, 'digit', 'S', 'G', 1, '~pencils', '~pencil', '~saveedit', '~pts', '~vtool', '~v', '~tablepen', '~trash', '~cut', '~copy', '~paste', '~undo', '~redo', 'S', 'G', '~abc', '~diagram', 'abpin:31@box', '~abpin2', '~abeye', '~abarrow', '~abrot', '~abpen', 'S', 'G', 2, 'wms', 'wmsq', 'wfs', 'S', 'G', 2, 'python', 'S', 'G', 2, 'help', 'S', 'G', 1, 'net'];
const ROW3: Item[] = ['G', '~triangle', 9.5, '~ptarrow:24', 'vn', 1, '~blobrot', '~hexarrow', '~blobring', '~blobs', '~blobring', '~blobringx', '~blobsx', '~blobcut', '~blobdiag', '~vrot', '~cross', '~split', '~split', '~split2', '~offset', '~reshape', '~v'];

/* ---------- docks ---------- */
const Main = styled.div`
  flex: 1;
  min-height: 0;
  display: flex;
  border-top: 1px solid #b4b4b4;
`;
const LeftDock = styled.div`
  width: 466px;
  flex: none;
  display: flex;
  flex-direction: column;
  padding: 1px 3px 0 0;
`;
const DockTitle = styled.div`
  height: 25px;
  flex: none;
  display: flex;
  align-items: center;
  background: #d9d9d9;
  border: 1px solid #bcbcbc;
  padding: 1px 5px 0 5px;
  font-size: 13.800px;
  margin-left: 1px;
`;
const DockName = styled.span`
  flex: 1;
`;
const DockBtns = styled.div`
  display: flex;
  gap: 8px;
  align-items: center;
`;
const DockBar = styled.div<{ $pad?: number }>`
  height: 28px;
  flex: none;
  display: flex;
  align-items: center;
  padding-left: ${p => p.$pad ?? 2}px;
`;
const TreeBox = styled.div<{ $h?: number }>`
  ${p => (p.$h ? `height:${p.$h}px;flex:none;` : 'flex:1;min-height:0;')}
  position: relative;
  background: #fff;
  border: 1px solid #868a8e;
  overflow: hidden;
  display: flex;
`;
const TreeList = styled.div`
  flex: 1;
  min-width: 0;
`;
const BrowserRow = styled.div`
  height: 24px;
  display: flex;
  align-items: center;
  font-size: 14px;
  white-space: nowrap;
`;
const ArrowCell = styled.div`
  width: 22px;
  display: flex;
  justify-content: center;
  flex: none;
`;
const RowLabel = styled.span`
  margin-left: 6px;
`;
const ScrollV = styled.div<{ $w?: number; $mr?: number }>`
  width: ${p => p.$w ?? 16}px;
  flex: none;
  background: #f0f0f0;
  display: flex;
  flex-direction: column;
  align-items: center;
  margin: 0 ${p => p.$mr ?? 1}px 0 0;
`;
const ScrollBtn = styled.div<{ $h?: number }>`
  height: ${p => p.$h ?? 18}px;
  width: 100%;
  flex: none;
  display: flex;
  align-items: center;
  justify-content: center;
`;
const ScrollThumb = styled.div<{ $h: number }>`
  width: 100%;
  height: ${p => p.$h}px;
  background: #cdcdcd;
  flex: none;
`;
const ScrollFill = styled.div`
  flex: 1;
`;
const Chev = ({ d, c = '#999', s = 10, w = 1.6 }: { d: 'r' | 'd' | 'u' | 'l'; c?: string; s?: number; w?: number }) => {
  const p = { r: 'M3.500 1l4 4-4 4', d: 'M1 3.500l4 4 4-4', u: 'M1 6.500l4-4 4 4', l: 'M6.500 1l-4 4 4 4' }[d];
  return <Svg $s={s} viewBox="0 0 10 10"><path d={p} fill="none" stroke={c} strokeWidth={w} /></Svg>;
};

const BROWSER: [string, string, boolean][] = [
  ['Favorites', 'favstar', false], ['Project Home', 'projhome', true], ['Home', 'homefld', true], ['C:\\', 'fld', true], ['D:\\', 'fld', true],
  ['GeoPackage', 'gp', false], ['SpatiaLite', 'spat', false], ['PostGIS', 'pg', false], ['MSSQL', 'mssql', true], ['Oracle', 'oracle', true],
  ['DB2', 'db2', true], ['WMS/WMTS', 'treeglobe', true], ['XYZ Tiles', 'treeglobe', true], ['WCS', 'treeglobe', false], ['WFS', 'treeglobe', true], ['OWS', 'treeglobe', false],
];

const LayerRow = styled.div<{ $sel?: boolean; $h?: number }>`
  height: ${p => p.$h ?? 24}px;
  display: flex;
  align-items: center;
  background: ${p => (p.$sel ? 'linear-gradient(90deg, #fff 20px, #d9d9d9 20px)' : 'transparent')};
`;
const CheckBox = styled.div<{ $s?: number }>`
  width: ${p => p.$s ?? 13}px;
  height: ${p => p.$s ?? 13}px;
  border: 1px solid #333;
  background: #fff;
  flex: none;
  display: flex;
  align-items: center;
  justify-content: center;
`;
const LayerName = styled.span<{ $u?: boolean }>`
  margin-left: 7px;
  font-family: ${UI};
  font-size: 14px;
  font-weight: 700;
  text-decoration: ${p => (p.$u ? 'underline' : 'none')};
`;
const LegendRow = styled.div`
  height: 27px;
  display: flex;
  align-items: center;
  padding-left: 49px;
`;
const LegendSym = styled.div`
  width: 26px;
  display: flex;
  flex: none;
`;
const LegendText = styled.span`
  font-family: ${VERD};
  font-size: 12.600px;
  white-space: nowrap;
`;
const Swatch = styled.div<{ $w: number; $h: number; $ml?: number }>`
  width: ${p => p.$w}px;
  height: ${p => p.$h}px;
  margin-left: ${p => p.$ml ?? 0}px;
  background: #808080;
  border: 1px solid #222;
`;
const Tick = () => <Svg $s={11} viewBox="0 0 12 12"><path d="M1.500 6.500l3 3 6-7" fill="none" stroke="#333" strokeWidth="1.200" /></Svg>;

/* ---------- map & dialog ---------- */
const MapArea = styled.div`
  flex: 1;
  min-width: 0;
  position: relative;
  background: #f0f0f0;
  border: 1px solid #8f8f8f;
  border-top: none;
  overflow: hidden;
`;
const MapSvg = styled.svg`
  position: absolute;
  inset: 0;
  width: 100%;
  height: 100%;
`;
const Dialog = styled.div`
  position: absolute;
  left: 82px;
  top: 24px;
  width: 822px;
  height: 660px;
  background: #f0f0f0;
  box-shadow: 0 0 5px rgba(0, 0, 0, 0.5);
  display: flex;
  flex-direction: column;
`;
const DlgTitle = styled.div`
  height: 37px;
  background: #fff;
  display: flex;
  align-items: center;
  padding: 0 10px 0 8px;
  flex: none;
`;
const DlgName = styled.span`
  flex: 1;
  margin-left: 4px;
  font-size: 15px;
  color: #999;
`;
const DlgBody = styled.div`
  flex: 1;
  min-height: 0;
  padding: 11px 14px 13px 11px;
  display: grid;
  grid-template-columns: 1fr 15px;
  grid-template-rows: 1fr 15px;
`;
const WebView = styled.div`
  background: #fff;
  overflow: hidden;
  font-family: ${ARIAL};
  font-size: 14.250px;
  color: #222;
  min-width: 0;
`;
const WebTop = styled.div`
  height: 64px;
  background: #fafafa;
`;
const WebHead = styled.div`
  height: 64px;
  background: #3f51b5;
  color: #fff;
  font-size: 16px;
  display: flex;
  align-items: center;
  justify-content: center;
`;
const WebSub = styled.div`
  height: 36px;
  background: #303f9f;
  color: #c5cae9;
  display: flex;
  align-items: center;
  justify-content: center;
  font-size: 14px;
`;
const WebTable = styled.table`
  border-spacing: 2px;
  table-layout: fixed;
  width: 1200px;
  margin: -1px 0 0 -1px;
  border-collapse: separate;
  & td { padding: 0 7px; white-space: nowrap; overflow: hidden; line-height: 15px; }
`;
const Key = styled.td<{ $top?: boolean; $c?: boolean }>`
  background: #e8eaf6;
  vertical-align: ${p => (p.$top ? 'top' : 'middle')};
  padding-top: ${p => (p.$top ? '14px' : '0')} !important;
  text-align: ${p => (p.$c ? 'center' : 'left')};
`;
const TopName = styled.div`
  height: 16px;
`;
const CenterSub = styled.div`
  text-align: center;
`;
const WebLink = styled.a`
  color: #0000ee;
  text-decoration: underline;
`;
const RowH = styled.tr<{ $h: number }>`
  height: ${p => p.$h}px;
`;
const HBar = styled.div<{ $l: number; $w: number }>`
  position: relative;
  background: #f0f0f0;
  display: flex;
  align-items: center;
  justify-content: space-between;
  padding: 0 3px;
  &::before {
    content: '';
    position: absolute;
    top: 0;
    bottom: 0;
    left: ${p => p.$l}px;
    width: ${p => p.$w}px;
    background: #cdcdcd;
  }
`;
const DlgCorner = styled.div``;

/* ---------- right dock ---------- */
const RightDock = styled.div`
  width: 426px;
  flex: none;
  display: flex;
  flex-direction: column;
  padding: 1px 0 0 4px;
  min-width: 0;
`;
const RightTitle = styled(DockTitle)`
  margin-left: 0;
  padding-right: 6px;
`;
const RightTree = styled.div`
  height: 726px;
  flex: none;
  background: #fff;
  border: 1px solid #868a8e;
  border-right: none;
  display: flex;
  flex-direction: column;
  overflow: hidden;
`;
const Row2 = styled.div<{ $h: number; $alt?: boolean }>`
  height: ${p => p.$h}px;
  flex: none;
  display: grid;
  grid-template-columns: 355px 1fr;
  align-items: center;
  font-size: 12px;
  background: ${p => (p.$alt ? '#f4f4f4' : '#fff')};
  white-space: nowrap;
  overflow: hidden;
`;
const HeadCell = styled.span<{ $sep?: boolean }>`
  font-size: 14px;
  padding-left: 4px;
  ${p => (p.$sep ? 'border-left:1px solid #e2e2e2;' : '')}
`;
const Indent = styled.div<{ $l: number }>`
  padding-left: ${p => p.$l}px;
  display: flex;
  align-items: center;
`;
const IndentText = styled.span<{ $m?: number }>`
  margin-left: ${p => p.$m ?? 0}px;
`;
const ValCell = styled.span`
  padding-left: 3px;
`;
const FormatCombo = styled.div`
  height: 26px;
  background: #e3e3e3;
  border: 1px solid #adadad;
  font-size: 14px;
  line-height: 24px;
  padding-left: 4px;
  margin-left: 1px;
`;
const HtmlBlock = styled.div`
  height: 489px;
  flex: none;
  padding-left: 60px;
  background: #f5f5f5;
`;
const HtmlView = styled.div`
  height: 100%;
  background: #fff;
  font-family: ${VERD};
  font-size: 16.500px;
  overflow: hidden;
`;
const HtmlHero = styled.div`
  height: 120px;
  background: #3f51b5;
  border-left: 1px solid #333;
  border-top: 1px solid #333;
  border-bottom: 1px solid #cfd3ee;
  padding: 20px 0 0 8px;
`;
const HeroTitle = styled.div`
  font-family: "Open Sans", sans-serif;
  font-weight: 300;
  font-size: 32.800px;
  line-height: 44px;
  color: #fff;
  height: 56px;
`;
const HeroBtn = styled.div`
  width: 176px;
  height: 34px;
  background: #2196f3;
  color: #fff;
  font-weight: 700;
  font-size: 15.400px;
  display: flex;
  align-items: center;
  justify-content: center;
`;
const HtmlId = styled.div`
  height: 34px;
  background: #303f9f;
  border-left: 1px solid #333;
  color: #fff;
  font-weight: 700;
  font-size: 16.400px;
  line-height: 34px;
  padding-left: 8px;
  white-space: nowrap;
`;
const HtmlRow = styled.div<{ $h: number; $alt?: boolean }>`
  height: ${p => p.$h}px;
  display: grid;
  grid-template-columns: 242px 1fr;
  border-bottom: 1px solid #ddd;
  background: ${p => (p.$alt ? '#f1f1f1' : '#fff')};
`;
const HtmlKey = styled.div`
  background: #e8eaf6;
  border-left: 1px solid #444;
  border-right: 1px solid #ddd;
  padding-left: 8px;
  display: flex;
  align-items: center;
  white-space: nowrap;
`;
const HtmlVal = styled.div`
  padding-left: 8px;
  display: flex;
  flex-direction: column;
  justify-content: center;
  white-space: nowrap;
  line-height: 18px;
  overflow: hidden;
`;
const Under = styled.span`
  text-decoration: underline;
`;
const HtmlNote = styled.div`
  font-style: italic;
  font-size: 15px;
  line-height: 22px;
  margin-top: 23px;
  white-space: pre;
`;
const RightFill = styled.div`
  flex: 1;
`;
const RightHBar = styled(HBar)`
  height: 15px;
  flex: none;
`;
const ModeRow = styled.div<{ $h: number }>`
  height: ${p => p.$h}px;
  flex: none;
  display: flex;
  align-items: center;
  font-size: 13.500px;
  padding-left: 5px;
  white-space: nowrap;
`;
const ModeLabel = styled.span<{ $w: number }>`
  width: ${p => p.$w}px;
  overflow: hidden;
  flex: none;
`;
const Combo = styled.div<{ $w: number; $bg?: string; $h?: number }>`
  width: ${p => p.$w}px;
  height: ${p => p.$h ?? 20}px;
  flex: none;
  background: ${p => p.$bg ?? '#e3e3e3'};
  border: 1px solid ${p => (p.$bg ? '#7a7a7a' : '#adadad')};
  display: flex;
  align-items: center;
  justify-content: space-between;
  padding: 0 4px;
  white-space: nowrap;
`;
const AutoBox = styled.div`
  margin-left: auto;
  display: flex;
  align-items: center;
  gap: 5px;
  width: 101px;
  overflow: hidden;
`;
const HelpBtn = styled.div`
  margin-left: auto;
  margin-right: 5px;
  width: 32px;
  height: 18px;
  background: #e3e3e3;
  border: 1px solid #adadad;
  line-height: 15px;
  text-align: center;
`;
const IdentBar = styled(DockBar)`
  padding-left: 1px;
`;
const MiniSep = styled.div`
  width: 1px;
  height: 18px;
  background: #d0d0d0;
  margin: 0 3px;
  flex: none;
`;

/* ---------- status bar ---------- */
const StatusBar = styled.div`
  height: 29px;
  flex: none;
  display: flex;
  align-items: center;
  padding-left: 4px;
  font-size: 12.500px;
  white-space: nowrap;
`;
const Locator = styled.div`
  width: 200px;
  height: 22px;
  background: #f2f2f2;
  border: 1px solid #777;
  display: flex;
  align-items: center;
  padding-left: 8px;
  gap: 8px;
  color: #888;
  font-size: 13.500px;
  flex: none;
`;
const StatusLabel = styled.div<{ $w: number }>`
  width: ${p => p.$w}px;
  flex: none;
`;
const StatusIcon = styled.div<{ $w: number; $pl?: number }>`
  width: ${p => p.$w}px;
  padding-left: ${p => p.$pl ?? 4}px;
  flex: none;
`;
const Field = styled.div<{ $w: number }>`
  width: ${p => p.$w}px;
  height: 22px;
  flex: none;
  background: #fff;
  border: 1px solid #777;
  display: flex;
  align-items: center;
  padding-left: 6px;
`;
const FieldText = styled.span`
  flex: 1;
  overflow: hidden;
`;
const Spin = styled.div`
  width: 15px;
  align-self: stretch;
  border-left: 1px solid #9a9a9a;
  background: #ededed;
  display: flex;
  flex-direction: column;
  align-items: center;
  justify-content: center;
  gap: 3px;
  flex: none;
  &::before, &::after {
    content: '';
    border-left: 3px solid transparent;
    border-right: 3px solid transparent;
  }
  &::before { border-bottom: 4px solid #222; }
  &::after { border-top: 4px solid #222; }
`;

/* ---------- data ---------- */
const MENU: [string, number][] = [['Project', 62], ['Edit', 42], ['View', 48], ['Layer', 51], ['Settings', 69], ['Plugins', 63], ['Vector', 58], ['Raster', 57], ['Database', 79], ['Web', 46], ['Mesh', 51], ['Processing', 86], ['Help', 50]];

function useMapLines() {
  return useMemo(() => {
    let seed = 9173;
    const rnd = () => { seed = (seed * 16807) % 2147483647; return seed / 2147483647; };
    const out: { d: string; k: number }[] = [];
    for (let i = 0; i < 340; i++) {
      let x = rnd() * 1030, y = rnd() * 850;
      let a = rnd() * 6.28;
      let d = `M${x.toFixed(0)} ${y.toFixed(0)}`;
      const n = 2 + Math.floor(rnd() * 6);
      for (let j = 0; j < n; j++) {
        a += (rnd() - 0.5) * 1.4;
        const l = 6 + rnd() * 18;
        x += Math.cos(a) * l; y += Math.sin(a) * l;
        d += `L${x.toFixed(0)} ${y.toFixed(0)}`;
      }
      out.push({ d, k: i % 3 });
    }
    return out;
  }, []);
}

export default function App() {
  const lines = useMapLines();
  return (
    <Root>
      <Global />
      <TitleBar>
        <Ico n="qgis" s={22} />
        <TitleText>Haleconnect QGIS Tutorial - QGIS</TitleText>
        <WinBtn><Svg $s={12} viewBox="0 0 12 12"><path d="M1 6h10" stroke="#222" /></Svg></WinBtn>
        <WinBtn><Svg $s={12} viewBox="0 0 12 12"><path d="M1.500 3.500h7v7h-7zM3.500 3.500v-2h7v7h-2" fill="none" stroke="#222" /></Svg></WinBtn>
        <WinBtn><Svg $s={12} viewBox="0 0 12 12"><path d="M1 1l10 10M11 1L1 11" stroke="#222" /></Svg></WinBtn>
      </TitleBar>
      <MenuBar>
        {MENU.map(([m, w], i) => <MenuItem key={m} $w={w} $on={i === 0}>{m}</MenuItem>)}
      </MenuBar>
      <Toolbar><Tools items={ROW1} /></Toolbar>
      <Toolbar><Tools items={ROW2} /></Toolbar>
      <Toolbar><Tools items={ROW3} /></Toolbar>
      <Main>
        <LeftDock>
          <DockTitle>
            <DockName>Browser</DockName>
            <DockBtns><Ico n="float" s={13} /><Ico n="close" s={13} /></DockBtns>
          </DockTitle>
          <DockBar $pad={2}>
            <Tools size={17} h={22} items={['newdoc:23', 'refresh:23', 'filterY:23', 'collapse:23', 'info:23']} />
          </DockBar>
          <TreeBox $h={381}>
            <TreeList>
              {BROWSER.map(([t, ic, arrow]) => (
                <BrowserRow key={t}>
                  <ArrowCell>{arrow && <Chev d="r" />}</ArrowCell>
                  <Ico n={ic} s={17} />
                  <RowLabel>{t}</RowLabel>
                </BrowserRow>
              ))}
            </TreeList>
            <ScrollV>
              <ScrollBtn><Chev d="u" c="#444" s={9} /></ScrollBtn>
              <ScrollThumb $h={269} />
              <ScrollFill />
              <ScrollBtn><Chev d="d" c="#444" s={9} /></ScrollBtn>
            </ScrollV>
          </TreeBox>
          <VGap $h={4} />
          <DockTitle>
            <DockName>Layers</DockName>
            <DockBtns><Ico n="float" s={13} /><Ico n="close" s={13} /></DockBtns>
          </DockTitle>
          <DockBar $pad={2}>
            <Tools size={17} h={22} items={['paint:23', 'addgroup:23', 'eye:23', 'filterY:23', 12, '~epsilon:23', 'vn', 'expand:22', 'collapse:23', 'removeL:23']} />
          </DockBar>
          <TreeBox>
            <TreeList>
              <LayerRow $sel>
                <ArrowCell><Chev d="d" c="#444" /></ArrowCell>
                <Spacer $w={2} />
                <CheckBox><Tick /></CheckBox>
                <Spacer $w={7} />
                <Ico n="raster1" s={14} />
                <LayerName $u>Protected Sites</LayerName>
              </LayerRow>
              <LegendRow><LegendSym><Swatch $w={21} $h={16} /></LegendSym><LegendText>protected sites: polygon</LegendText></LegendRow>
              <LegendRow><LegendSym><Svg $s={21} viewBox="0 0 21 21"><path d="M0 19L8 10l5 3 8-10" fill="none" stroke="#222" /></Svg></LegendSym><LegendText>protected sites: line</LegendText></LegendRow>
              <LegendRow><LegendSym><Swatch $w={15} $h={15} $ml={2} /></LegendSym><LegendText>protected sites: point</LegendText></LegendRow>
              <LayerRow>
                <ArrowCell><Chev d="d" c="#444" /></ArrowCell>
                <Spacer $w={2} />
                <CheckBox><Tick /></CheckBox>
                <Spacer $w={7} />
                <Ico n="raster2" s={14} />
                <LayerName>ESRI Gray (light)</LayerName>
              </LayerRow>
            </TreeList>
          </TreeBox>
        </LeftDock>

        <MapArea>
          <MapSvg viewBox="0 0 1025 844" preserveAspectRatio="none">
            {lines.map((l, i) => <path key={i} d={l.d} fill="none" stroke={l.k === 0 ? '#e3e3e3' : '#fafafa'} strokeWidth={l.k === 1 ? 1.500 : 1} />)}
            <path d="M62 559l10-4 8 3 6-3 4 6-1 8 8 6-4 8-12 2-10-3-8-4 2-8z" fill="#777" stroke="#555" />
            <path d="M104 707h4M112 707h2" stroke="#555" />
          </MapSvg>
          <Dialog>
            <DlgTitle>
              <Ico n="qgis" s={21} />
              <DlgName>QGIS3</DlgName>
              <Ico n="thinx" s={14} />
            </DlgTitle>
            <DlgBody>
              <WebView>
                <WebTop />
                <WebHead>ProtectedSite</WebHead>
                <WebSub>DE_032560000000_NSG_HA_208</WebSub>
                <WebTable>
                  <colgroup><col width="200" /><col width="166" /><col width="32" /><col /></colgroup>
                  <tbody>
                    <RowH $h={44}><Key>description</Key><td colSpan={3}>Uchter Moor</td></RowH>
                    <RowH $h={44}><Key>identifier</Key><td colSpan={3}><WebLink href="#">https://registry.gdi-de.org/id/de.ni.lk.ni/DE_032560000000_NSG_HA_208</WebLink></td></RowH>
                    <RowH $h={44}><Key $top rowSpan={3}>geometry</Key><Key colSpan={2}>exterior.posList</Key><td>PosList(1702) [8.750055, 52.463602; 8.876762, 52.527458; 8.876779, 52.527470]</td></RowH>
                    <RowH $h={44}><Key $top rowSpan={2}><TopName>interior.posList</TopName><CenterSub>(2)</CenterSub></Key><Key $c>1</Key><td>PosList(22) [8.784596, 52.519176; 8.787449, 52.520852]</td></RowH>
                    <RowH $h={40}><Key $c>2</Key><td>PosList(18) [8.759029, 52.517276; 8.761089, 52.518511]</td></RowH>
                    <RowH $h={44}><Key>inspireID</Key><td colSpan={3}>DE_032560000000_NSG_HA_208</td></RowH>
                    <RowH $h={44}><Key>legalFoundationDate</Key><td colSpan={3}>2017-12-18T00:00:00Z</td></RowH>
                    <RowH $h={44}><Key $top rowSpan={3}>legalFoundationDocument</Key><Key colSpan={2}>title</Key><td>§16 Nds. Ausführungsgesetz zum Bundesnaturschutzgesetz<br />19.02.2010 i.V.m. § 23 Bundesnaturschutzgesetz (BNatSchG)</td></RowH>
                    <RowH $h={44}><Key colSpan={2}>date.date</Key><td>2010-02-19</td></RowH>
                    <RowH $h={44}><Key colSpan={2} /><td /></RowH>
                  </tbody>
                </WebTable>
              </WebView>
              <ScrollV $w={15} $mr={0}>
                <ScrollBtn $h={17}><Chev d="u" c="#444" s={9} /></ScrollBtn>
                <ScrollThumb $h={297} />
                <ScrollFill />
                <ScrollBtn $h={17}><Chev d="d" c="#444" s={9} /></ScrollBtn>
              </ScrollV>
              <HBar $l={17} $w={583}><Chev d="l" c="#444" s={9} /><Chev d="r" c="#444" s={9} /></HBar>
              <DlgCorner />
            </DlgBody>
          </Dialog>
        </MapArea>

        <RightDock>
          <RightTitle>
            <DockName>Identify Results</DockName>
            <DockBtns><Ico n="float" s={13} /><Ico n="close" s={13} /></DockBtns>
          </RightTitle>
          <IdentBar>
            <Tools size={17} h={22} items={['~treeBtn:23']} />
            <MiniSep />
            <Tools size={17} h={22} items={['expand:23', 'collapse:23', 'expandnew:23@on']} />
            <MiniSep />
            <Tools size={17} h={22} items={['deselS:23']} />
            <MiniSep />
            <Tools size={17} h={22} items={['~copyF:23', '~print:23', 'idsel:23', 'v']} />
          </IdentBar>
          <RightTree>
            <Row2 $h={24}><HeadCell>Feature</HeadCell><HeadCell $sep>Value</HeadCell></Row2>
            <Row2 $h={17}><Indent $l={6}><Chev d="d" c="#444" /><IndentText $m={12}>0</IndentText></Indent><ValCell>Protected Site</ValCell></Row2>
            <Row2 $h={26} $alt><Indent $l={47}>Format</Indent><FormatCombo>Html</FormatCombo></Row2>
            <Row2 $h={17}><Indent $l={26}><Chev d="d" c="#444" /><IndentText $m={2}>PS.ProtectedSite</IndentText></Indent><span /></Row2>
            <HtmlBlock>
              <HtmlView>
                <HtmlHero>
                  <HeroTitle>ProtectedSite</HeroTitle>
                  <HeroBtn>Details anzeigen</HeroBtn>
                </HtmlHero>
                <HtmlId>#DE_032560000000_NSG_HA_208</HtmlId>
                <HtmlRow $h={36}><HtmlKey>description</HtmlKey><HtmlVal>Uchter Moor</HtmlVal></HtmlRow>
                <HtmlRow $h={53} $alt><HtmlKey>identifier</HtmlKey><HtmlVal><Under>https://registry.gdi-</Under><Under>de.org/id/de.ni.lk.ni/DE</Under></HtmlVal></HtmlRow>
                <HtmlRow $h={35}><HtmlKey>legalFoundationDate</HtmlKey><HtmlVal>2017-12-18T00:00:00Z</HtmlVal></HtmlRow>
                <HtmlRow $h={35} $alt><HtmlKey>siteProtectionClassification</HtmlKey><HtmlVal>natureConservation</HtmlVal></HtmlRow>
                <HtmlNote>{'Maximal 50 Objekte abgefragt. Gefunden: 1 ( 1\n)'}</HtmlNote>
              </HtmlView>
            </HtmlBlock>
            <Row2 $h={17}><Indent $l={45}><Chev d="d" c="#444" /><IndentText $m={8}>(Derived)</IndentText></Indent><span /></Row2>
            <Row2 $h={17} $alt><Indent $l={83}>(clicked coordinate X)</Indent><ValCell>8.792</ValCell></Row2>
            <Row2 $h={17}><Indent $l={83}>(clicked coordinate Y)</Indent><ValCell>52.491</ValCell></Row2>
            <RightFill />
            <RightHBar $l={17} $w={357}><Chev d="l" c="#444" s={9} /><Chev d="r" c="#444" s={9} /></RightHBar>
          </RightTree>
          <ModeRow $h={33}>
            <ModeLabel $w={32}>Mod</ModeLabel>
            <Combo $w={136}>Current layer<Chev d="d" c="#666" s={9} w={1} /></Combo>
            <AutoBox><CheckBox $s={13} />Auto open form</AutoBox>
          </ModeRow>
          <ModeRow $h={28}>
            <ModeLabel $w={27}>View</ModeLabel>
            <Spacer $w={1} />
            <Combo $w={69}>Tree<Chev d="d" c="#666" s={9} w={1} /></Combo>
            <HelpBtn>Help</HelpBtn>
          </ModeRow>
        </RightDock>
      </Main>
      <StatusBar>
        <Locator><Ico n="search" s={13} />Type to locate (Ctrl+K)</Locator>
        <Spacer $w={834} />
        <StatusLabel $w={65}>Coordinate</StatusLabel>
        <Field $w={104}>8.6807,52.5289</Field>
        <StatusIcon $w={33}><Ico n="mouse" s={17} /></StatusIcon>
        <StatusLabel $w={34}>Scale</StatusLabel>
        <Combo $w={94} $bg="#fff" $h={22}>1:149979<Chev d="d" c="#666" s={9} w={1} /></Combo>
        <StatusIcon $w={33} $pl={11}><Ico n="lock" s={16} /></StatusIcon>
        <StatusLabel $w={56}>Magnifier</StatusLabel>
        <Field $w={81}><FieldText>100%</FieldText><Spin /></Field>
        <Spacer $w={10} />
        <StatusLabel $w={56}>Rotation</StatusLabel>
        <Field $w={79}><FieldText>0.0 °</FieldText><Spin /></Field>
        <Spacer $w={7} />
        <CheckBox $s={13}><Tick /></CheckBox>
        <Spacer $w={5} />
        <StatusLabel $w={58}>Render</StatusLabel>
        <Ico n="sglobe" s={16} />
        <Spacer $w={4} />
        <StatusLabel $w={82}>EPSG:4326</StatusLabel>
        <Ico n="msg" s={16} />
        <Spacer $w={14} />
        <Ico n="puzzle" s={18} />
      </StatusBar>
    </Root>
  );
}
